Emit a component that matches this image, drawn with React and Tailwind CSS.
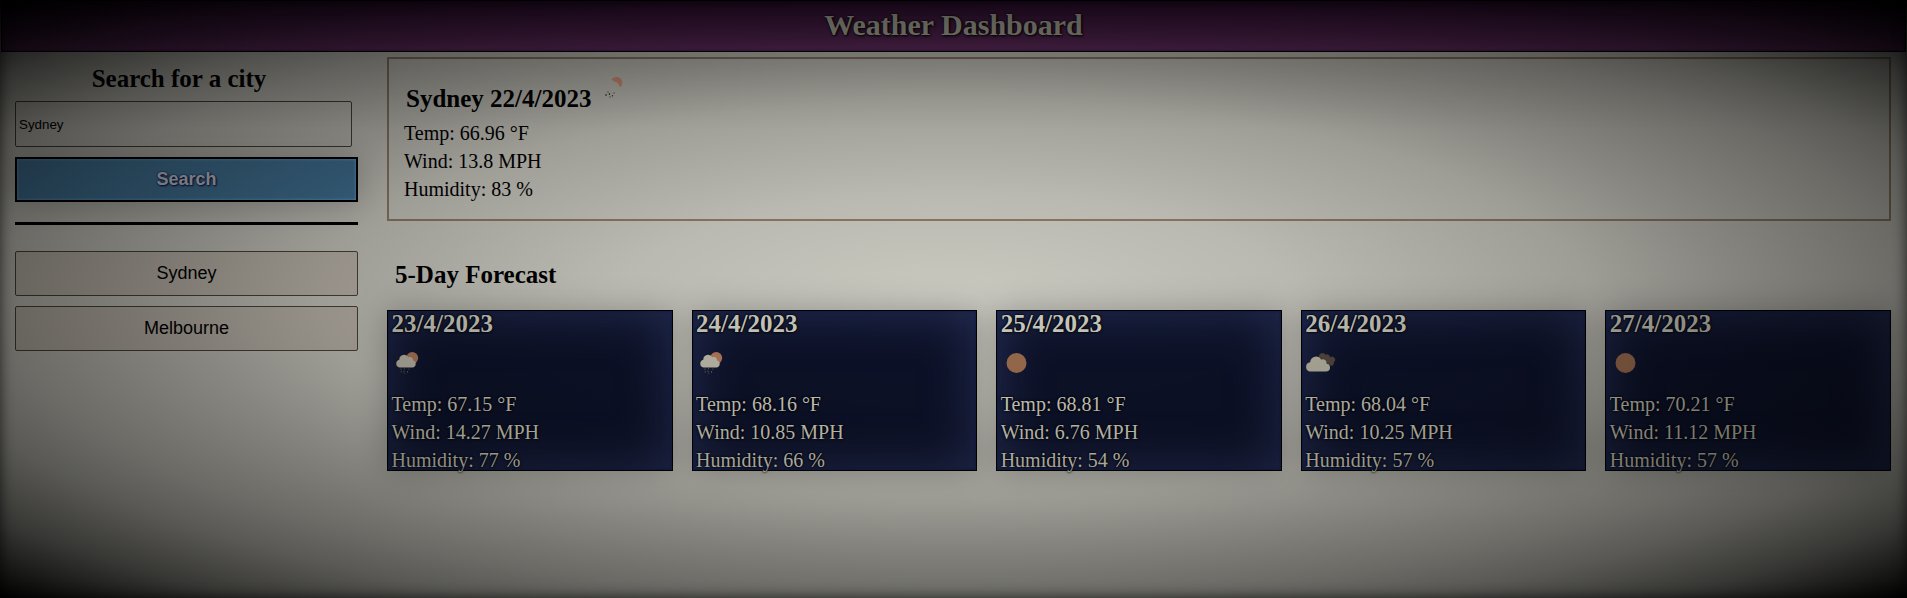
const days = [
  { date: '23/4/2023', icon: 'rain', temp: '67.15 °F', wind: '14.27 MPH', humidity: '77 %' },
  { date: '24/4/2023', icon: 'rain', temp: '68.16 °F', wind: '10.85 MPH', humidity: '66 %' },
  { date: '25/4/2023', icon: 'sun', temp: '68.81 °F', wind: '6.76 MPH', humidity: '54 %' },
  { date: '26/4/2023', icon: 'clouds', temp: '68.04 °F', wind: '10.25 MPH', humidity: '57 %' },
  { date: '27/4/2023', icon: 'sun', temp: '70.21 °F', wind: '11.12 MPH', humidity: '57 %' },
];

function WeatherIcon({ kind }) {
  return (
    <svg width="34" height="28" viewBox="0 0 34 28" className="block overflow-visible">
      {kind === 'sun' && <circle cx="15.5" cy="14" r="10" fill="#9a6b4e" />}
      {kind === 'rain' && (
        <g>
          <circle cx="20.2" cy="9" r="6" fill="#b0765a" />
          <path
            d="M7.500 18.500a4 4 0 0 1-.2-7.800 4.800 4.800 0 0 1 9-2.500 3.300 3.300 0 0 1 4.800 3.300 3.600 3.600 0 0 1-.3 7Z"
            fill="#bcb8a8"
          />
          <path
            d="M9 19.500v1.500M12.500 19v1.200M16.800 19.500v1.300M12 21.500v2M9.200 22v1.500M15.500 22v1.800M12.800 24v.8"
            stroke="#55554a"
            strokeWidth="1"
          />
        </g>
      )}
      {kind === 'clouds' && (
        <g>
          <path
            d="M14 8a3.500 3.500 0 0 1 6.500-2.200 3 3 0 0 1 4.500 2.700 3 3 0 0 1 4 4.500c0 2-1 3.800-2.500 4Z"
            fill="#54483e"
          />
          <path
            d="M5 22.500a4.700 4.700 0 0 1 .2-9.300 6 6 0 0 1 11.200-2.700 3.700 3.700 0 0 1 5.200 3.900 4.100 4.100 0 0 1 0 8.100Z"
            fill="#b6b3a2"
          />
        </g>
      )}
    </svg>
  );
}

function DayCard({ day }) {
  return (
    <article className="h-[161px] w-[19%] border border-black bg-[#0d1229] pl-[3.5px] text-[#cbcabf] shadow-[0_0_30px_rgba(0,0,0,0.25),inset_0_0_3px_#0a1c50,inset_0_0_50px_#29325a] [text-shadow:0_0_2px_#000,0_0_3px_#000]">
      <h3 className="h-[38px] text-[25px] leading-[25px] font-bold">{day.date}</h3>
      <div className="h-[41px]">
        <WeatherIcon kind={day.icon} />
      </div>
      <p className="text-xl leading-[28px]">Temp: {day.temp}</p>
      <p className="text-xl leading-[28px]">Wind: {day.wind}</p>
      <p className="text-xl leading-[28px]">Humidity: {day.humidity}</p>
    </article>
  );
}

export default function App() {
  return (
    <div className="relative h-[598px] overflow-hidden bg-[#cac9c0] font-['Liberation_Serif',serif] text-black">
      <header className="mx-px flex h-[52px] items-center justify-center border border-black bg-linear-to-b from-[#38123a] to-[#6b3168] pb-[3px] shadow-[inset_0_0_3px_#3a0a50]">
        <h1 className="text-[30px] leading-none font-bold text-[#c4c3b3] [text-shadow:0_0_2px_#000,1px_1px_3px_#000]">Weather Dashboard</h1>
      </header>
      <div className="flex">
        <aside className="w-[358px] pl-[15px]">
          <h2 className="h-[49px] pt-[11px] pr-[15px] text-center text-[25px] leading-8 font-bold">Search for a city</h2>
          <input
            defaultValue="Sydney"
            className="block h-[46px] w-[337px] rounded-xs border border-[#4a443c] bg-transparent px-[3px] font-['Liberation_Sans',sans-serif] text-[13.33px]"
          />
          <button className="mt-[10px] block h-[45px] w-full border-2 border-black bg-[#437598] pb-[2px] font-['Liberation_Sans',sans-serif] text-lg font-bold text-[#c8c9cb] shadow-[0_0_30px_rgba(0,0,0,0.2),inset_0_0_3px_#6fb4ea] [text-shadow:0_0_2px_#001060,1px_1px_2px_#001040]">
            Search
          </button>
          <div className="mt-5 h-[3px] w-full bg-black" />
          <div className="mt-[26px] flex flex-col gap-[10px] font-['Liberation_Sans',sans-serif] text-lg">
            <button className="h-[45px] rounded-xs border border-[#4a443c] bg-[#c0b9ae] pb-[2px]">Sydney</button>
            <button className="h-[45px] rounded-xs border border-[#4a443c] bg-[#c0b9ae] pb-[2px]">Melbourne</button>
          </div>
        </aside>
        <main className="ml-[29px] w-[1504px] pt-[5px]">
          <section className="h-[164px] border-2 border-[#8f7a66] pt-[24px] pl-[15px]">
            <h2 className="flex h-[36px] pl-[2px] text-[25px] leading-[32px] font-bold">
              Sydney 22/4/2023
              <svg width="24" height="26" viewBox="0 0 24 26" className="-mt-[8px] ml-[12px]">
                <path d="M8.500 4.500C10 2 17 0 19 6c.8 2-.3 5-1.500 6-2-.3-1.500-3.500-3.300-4.500S10.500 6.500 8.500 4.500Z" fill="#de9578" />
                <path d="M5 16.500v1M3 19v2M6.500 18v2M9.500 20v1.500M7 21.500v1M11 17.500v1" stroke="#48463c" strokeWidth="1.200" />
              </svg>
            </h2>
            <p className="text-xl leading-[28px]">Temp: 66.96 °F</p>
            <p className="text-xl leading-[28px]">Wind: 13.8 MPH</p>
            <p className="text-xl leading-[28px]">Humidity: 83 %</p>
          </section>
          <h2 className="h-[89px] pt-[38px] pl-2 text-[25px] leading-[32px] font-bold">5-Day Forecast</h2>
          <section className="flex justify-between">
            {days.map((day) => (
              <DayCard key={day.date} day={day} />
            ))}
          </section>
        </main>
      </div>
      <div className="pointer-events-none absolute inset-0 bg-[linear-gradient(rgba(0,0,0,0.2),rgba(0,0,0,0)_130px),radial-gradient(rgba(0,0,0,0)_0%,rgba(0,0,0,0.08)_25%,rgba(0,0,0,0.22)_47%,rgba(0,0,0,0.33)_57%,rgba(0,0,0,0.47)_71%,rgba(0,0,0,0.56)_78%,rgba(0,0,0,0.73)_88%,rgba(0,0,0,0.91)_96%,#000_100%)] shadow-[inset_0_0_14px_rgba(0,0,0,0.7)]" />
    </div>
  );
}
